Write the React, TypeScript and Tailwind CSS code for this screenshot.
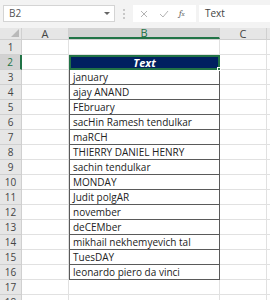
import React from 'react';

const rows: (string | null)[] = [
  null,
  'Text',
  'january',
  'ajay ANAND',
  'FEbruary',
  'sacHin Ramesh tendulkar',
  'maRCH',
  'THIERRY DANIEL HENRY',
  'sachin tendulkar',
  'MONDAY',
  'Judit polgAR',
  'november',
  'deCEMber',
  'mikhail nekhemyevich tal',
  'TuesDAY',
  'leonardo piero da vinci',
  null,
  null,
];

const font = { fontFamily: '"Open Sans", "Liberation Sans", sans-serif' };

const App: React.FC = () => {
  return (
    <div className="w-[270px] h-[300px] overflow-hidden bg-white text-[#222]" style={font}>
      {/* formula bar */}
      <div className="h-[28px] bg-[#f3f3f3] flex items-start pt-[5px] pl-[3px]">
        <div className="w-[112px] h-[17px] bg-white border border-[#d4d4d4] flex items-center justify-between pl-[5px] pr-[4px]">
          <span className="text-[10px] text-[#555]">B2</span>
          <span className="w-0 h-0 border-l-[3px] border-r-[3px] border-t-[3px] border-l-transparent border-r-transparent border-t-[#666]" />
        </div>
        <div className="w-[18px] h-[17px] flex flex-col items-center justify-center gap-[2px]">
          <span className="w-[2px] h-[2px] bg-[#c8c8c8]" />
          <span className="w-[2px] h-[2px] bg-[#c8c8c8]" />
          <span className="w-[2px] h-[2px] bg-[#c8c8c8]" />
        </div>
        <div className="w-[63px] h-[17px] bg-white flex items-center text-[#a6a6a6]">
          <svg width="8" height="8" viewBox="0 0 8 8" className="ml-[7px]">
            <path d="M1 1L7 7M7 1L1 7" stroke="#b4b4b4" strokeWidth="1" />
          </svg>
          <svg width="10" height="8" viewBox="0 0 10 8" className="ml-[11px]">
            <path d="M1 4L4 7L9 1" stroke="#b4b4b4" strokeWidth="1" fill="none" />
          </svg>
          <span className="ml-[10px] text-[9px] italic text-[#666] font-serif">f<span className="text-[7px]">x</span></span>
        </div>
        <div className="ml-[3px] flex-1 h-[17px] bg-white flex items-center pl-[6px]">
          <span className="text-[10px] text-[#444]">Text</span>
        </div>
      </div>

      {/* column headers */}
      <div className="h-[12px] flex bg-[#e6e6e6] text-[11px] text-[#444] border-b border-[#d0d0d0]">
        <div className="w-[22px] relative border-r border-[#d0d0d0]">
          <span className="absolute right-[2px] bottom-[2px] w-0 h-0" style={{ borderBottom: '8px solid #b9b9b9', borderLeft: '8px solid transparent' }} />
        </div>
        <div className="w-[47px] border-r border-[#d0d0d0] flex items-center justify-center leading-none">A</div>
        <div className="w-[151px] bg-[#d2d2d2] border-r border-[#d0d0d0] border-b-2 border-b-[#217346] flex items-center justify-center leading-none text-[#217346]">B</div>
        <div className="w-[47px] border-r border-[#d0d0d0] flex items-center justify-center leading-none">C</div>
        <div className="flex-1" />
      </div>

      {/* grid */}
      {rows.map((val, i) => {
        const n = i + 1;
        const isHead = n === 2;
        const inTable = n >= 3 && n <= 16;
        return (
          <div key={n} className="h-[15px] flex">
            <div
              className={
                isHead
                  ? 'w-[22px] bg-[#d2d2d2] border-r-2 border-r-[#217346] border-b border-[#d0d0d0] flex items-center justify-center text-[10px] text-[#217346]'
                  : 'w-[22px] bg-[#e6e6e6] border-r border-[#d0d0d0] border-b border-b-[#d0d0d0] flex items-center justify-center text-[10px] text-[#444]'
              }
            >
              {n}
            </div>
            <div className="w-[47px] border-r border-b border-[#e1e1e1]" />
            {isHead ? (
              <div className="w-[151px] relative border-2 border-[#217346] bg-[#002060] flex items-center justify-center">
                <span className="text-[11px] font-bold italic text-white leading-none">{val}</span>
                <span className="absolute -right-[3px] -bottom-[3px] w-[4px] h-[4px] bg-[#217346] border border-white" />
              </div>
            ) : inTable ? (
              <div className="w-[151px] border-x border-b border-[#5a5a5a] flex items-center pl-[3px] overflow-hidden whitespace-nowrap">
                <span className="text-[10px] text-[#222] leading-none">{val}</span>
              </div>
            ) : (
              <div className="w-[151px] border-r border-b border-[#e1e1e1]" />
            )}
            <div className="w-[47px] border-r border-b border-[#e1e1e1]" />
            <div className="flex-1 border-b border-[#e1e1e1]" />
          </div>
        );
      })}
    </div>
  );
};

export default App;
